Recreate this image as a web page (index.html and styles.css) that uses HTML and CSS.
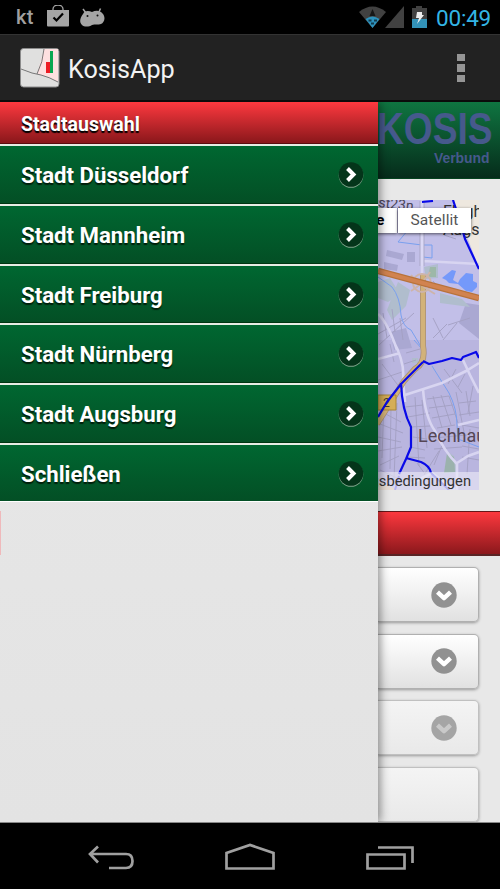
FILE: index.html
```html
<!DOCTYPE html>
<html lang="de">
<head>
<meta charset="utf-8">
<title>KosisApp</title>
<link rel="stylesheet" href="styles.css">
</head>
<body>
<div class="phone">
  <div class="status">
    <span class="kt">kt</span>
    <svg class="bag" width="22" height="22" viewBox="0 0 22 22"><path d="M6 5V4a5 4 0 0 1 10 0v1" fill="none" stroke="#a5a5a5" stroke-width="1.3"/><path d="M0 5h22v15.500q0 1-1 1H1q-1 0-1-1z" fill="#a5a5a5"/><path d="M6.500 12.500l3 3 6.500-7" fill="none" stroke="#000" stroke-width="2.200"/></svg>
    <svg class="bean" width="25" height="19" viewBox="0 0 25 19"><path d="M3 1L6 5M20.500 .5l-2 4.500" stroke="#a5a5a5" stroke-width="1.500"/><path d="M3 6C5 2 9 3 12 4c4-2 8-2 11 2 3 4 1 9-2 10-3 1-6 0-9 1-3 2-8 2-10 0-3-3-2-7 1-11z" fill="#a5a5a5"/><circle cx="7.500" cy="8" r="1" fill="#111"/><circle cx="17.500" cy="7.500" r="1" fill="#111"/></svg>
    <span class="grow"></span>
    <svg width="69" height="22" viewBox="0 0 69 22"><path d="M0 6q13.500-11 27 0L13.500 22z" fill="#414141"/><path d="M6.500 13q7-5 14 0l-7 9z" fill="#2c92bd"/><path d="M10.500 10L13.500 3l3 7z" fill="#171717"/><path d="M9.500 13.500h3v2h-3zM15 13.500h3v2h-3zM12 16.500h3v2h-3z" fill="#123b4d"/><path d="M26 22L45 0v22z" fill="#414141"/><path d="M53 2h4V0h6v2h5v11H53z" fill="#414141"/><path d="M53 13h15v9H53z" fill="#3292b8"/><path d="M58 6h5v3h2l-7 9 2-6h-3z" fill="#eee"/></svg>
    <span class="clock">00:49</span>
  </div>
  <div class="actionbar">
    <svg width="40" height="40" viewBox="0 0 40 40"><rect x=".5" y=".5" width="38.500" height="38.500" rx="3" fill="#e0e0df" stroke="#8b8b8b"/><path d="M24 1h14v33l-9-5-12-3z" fill="#fde0e0"/><path d="M24 1q-1 13-7 25M1 21q12 5 20 6 8 2 17 7" fill="none" stroke="#777" stroke-width="1"/><path d="M26 14h4v11h-4z" fill="#ed1c24"/><path d="M30 3h3v22h-3z" fill="#0aa651"/></svg>
    <span class="apptitle">KosisApp</span>
    <span class="overflow"><i></i><i></i><i></i></span>
  </div>
  <div class="content">
    <nav class="panel">
      <div class="divider">Stadtauswahl</div>
      <a class="item"><span>Stadt Düsseldorf</span><svg class="arrow" viewBox="0 0 26 26"><g id="chevron"><circle cx="13" cy="13.500" r="12.300" fill="#83a48c"/><circle cx="13" cy="12.500" r="12.300" fill="#04351a"/><path d="M9.500 6.500l6 6-6 6" fill="none" stroke="#fff" stroke-width="4"/></g></svg></a>
      <a class="item"><span>Stadt Mannheim</span><svg class="arrow" viewBox="0 0 26 26"><use href="#chevron"/></svg></a>
      <a class="item"><span>Stadt Freiburg</span><svg class="arrow" viewBox="0 0 26 26"><use href="#chevron"/></svg></a>
      <a class="item"><span>Stadt Nürnberg</span><svg class="arrow" viewBox="0 0 26 26"><use href="#chevron"/></svg></a>
      <a class="item"><span>Stadt Augsburg</span><svg class="arrow" viewBox="0 0 26 26"><use href="#chevron"/></svg></a>
      <a class="item"><span>Schließen</span><svg class="arrow" viewBox="0 0 26 26"><use href="#chevron"/></svg></a>
      <div class="sliver"></div>
    </nav>
    <main class="page">
      <header class="brand">
        <svg width="122" height="77" viewBox="378 102 122 77" font-family="Liberation Sans, sans-serif" font-weight="bold" fill="#46598c"><text x="377" y="144" font-size="45" textLength="115.500" lengthAdjust="spacingAndGlyphs">KOSIS</text><text x="434" y="162.500" font-size="14" textLength="55.500" lengthAdjust="spacingAndGlyphs">Verbund</text></svg>
      </header>
      <div class="map">
        <svg width="101" height="290" viewBox="378 200 101 290" fill="none">
          <path d="M378 200h101v290H378z" fill="#c2bfe8"/>
          <path d="M378 340h101v150H378z" fill="#b9b5df"/>
          <path d="M453 200h26v68z" fill="#eee8df"/>
          <g fill="#aaa8d2"><path d="M387 250l17 4-2 6-16-4zM384 262l14 3-1 6-13-2zM407 252h8v10h-8zM466 303l13 2v34l-20-16zM390 332l16-4 6 20-18 2zM445 213l10 0 3 8-12-1z"/></g>
          <g fill="#b0bdcd"><path d="M424 267l14-3v14l-12 1zM378 282l12-4 10 16-12 8-10-4zM440 293l22 6 8 8-30-4zM398 282l12 8-4 16-14 14-5-10zM448 452l6 4 4 16-13 1zM412 358h6v5h-6z"/></g>
          <path d="M430 267h6v10h-8z" fill="#9db8a8"/>
          <path d="M447 453l7 4 1 15-11 1z" fill="#9bb2ad"/>
          <g stroke="#a39fc2" stroke-width=".9">
            <path d="M379 345l35-32M378 334l28-16M383 313l4 25M392 309l3 23M400 318l3 22M378 359l22-7M390 344l4 18M382 364l18 24M378 380l24-8M406 353l14-4M404 364l12-4M433 318l10 20M433 338l14-14M443 340l14-17M448 325l22-7"/>
            <path d="M378 410l23 12M380 424l23 9M378 437l23 5M378 451l24-4M380 465l19-9M384 402l-2 56M391 408l-1 61M397 403l-3 76M378 418l8-13M380 470l17 8M405 407l18-2M408 417l22-4M410 427l20-1M413 437l14 2M410 447l15 3M407 457l18 1M415 397l4 69M422 400l5 48"/>
            <path d="M427 399l22-3M429 408l24-3M432 418l23-4M437 428l18-3M433 396l9 32M441 395l10 30M449 396l9 27M444 369l18 24M456 369l-8 15M465 374l-7 13M456 392l8 40M466 391l4 25M473 386l-5 27M459 403l17-2M459 415l20-3M433 438l34-3M434 449l28-2M434 465l11-27M424 475l15-24M462 425l17 3M462 446l17 3M462 457l17 3M470 429l-3 45M417 463l8 11"/>
            <path d="M444 235l12 4M430 225l20 3M426 284l52 15M433 281l7 9"/>
          </g>
          <path d="M408 230l-10 12 24 3M424 245l8 0v13l-9-1M378 277q10 7 14 10 8 10 9 28 2 12 10 15l12 20M414 340l8 9M432 366l17 27q8 16 8 32l1 14 21 8" stroke="#79a0ef"/>
          <path d="M422 200v152M423 261l56 3M393 340q12 22 10 40l2 22M405 395l37-12 24-12 13-8M423 389q2 28 12 42 9 20 22 33v26M463 360l7 15 9 18M458 425l21-5M457 463l11-7 11-4M378 314q10 9 19 36M378 359l22-6M410 484l22-11 23 17" stroke="#d8d5f1" stroke-width="2.600"/>
          <path d="M422 201v65" stroke="#aaa7c8" stroke-width="5"/><path d="M422 201v65" stroke="#dbd8f5" stroke-width="3"/>
          <path d="M423 274v72q3 17-8 23l-11 12-27 43" stroke="#a78e76" stroke-width="6"/><path d="M423 274v72q3 17-8 23l-11 12-27 43" stroke="#d2b279" stroke-width="4.500"/>
          <ellipse cx="422" cy="283" rx="9" ry="9" stroke="#cdb4aa" stroke-width="2"/><path d="M411 275q8 10 24 19M411 291q12-7 19-19" stroke="#cdb4aa" stroke-width="2"/>
          <path d="M378 271l101 27" stroke="#b8733b" stroke-width="6.500"/><path d="M378 271l101 27" stroke="#d18350" stroke-width="4"/>
          <path d="M442 278l10-8 4 1-3 9 5 3 2-4 6-6 7 1 0 7 4 2 0 4-5 5-6-1-8-7-9-1-3-3z" fill="#7499fa"/>
          <g font-family="Roboto, sans-serif" fill="#4b4657"><text x="378" y="207" font-size="14" transform="rotate(6 378 207)">st23n</text><text x="443" y="217" font-size="16" fill="#333">Flugh</text><text x="443" y="235" font-size="16" fill="#333">Augs</text></g>
          <path d="M378 395h18v15h-18z" fill="#d5ae57" stroke="#a98738"/><text x="383" y="407" font-family="Roboto, sans-serif" font-size="12" fill="#403c30">2</text>
          <g stroke="#0909e8" stroke-width="2.200" stroke-linejoin="round"><path d="M378 417l9-15 14-18 22-22M423 361l6 3 13-3 10-3 9 2 2-3 8-3 5-2 3 6M401 383q1 27 10 44v20l-5 12-7 15M406 458l15 4q9 4 10 11M422 202l11-1M453 200l7 21 5 18 14 30"/></g>
          <path d="M378 482l20 8h-20z" fill="#dfc59d"/>
          <text x="418" y="441.500" font-family="Roboto, sans-serif" font-size="18" fill="#554655">Lechhausen</text>
          <path d="M431 473l18 17M399 476l-4 14" stroke="#5b5be8" stroke-width="2"/>
        </svg>
        <div class="maptypes"><span class="karte">e</span><span class="satellit">Satellit</span></div>
        <div class="terms">gsbedingungen</div>
      </div>
      <div class="redbar"></div>
      <div class="fields">
        <div class="field"><svg viewBox="0 0 26 26"><circle cx="13" cy="13" r="12.700" fill="#919191"/><path d="M6.500 10.200l6.500 6 6.500-6" fill="none" stroke="#fff" stroke-width="4.400" stroke-linejoin="round"/></svg></div>
        <div class="field"><svg viewBox="0 0 26 26"><circle cx="13" cy="13" r="12.700" fill="#919191"/><path d="M6.500 10.200l6.500 6 6.500-6" fill="none" stroke="#fff" stroke-width="4.400" stroke-linejoin="round"/></svg></div>
        <div class="field off"><svg viewBox="0 0 26 26"><circle cx="13" cy="13" r="12.700" fill="#a5a5a5"/><path d="M6.500 10.200l6.500 6 6.500-6" fill="none" stroke="#c9c9c9" stroke-width="4.400" stroke-linejoin="round"/></svg></div>
        <div class="field off"></div>
      </div>
    </main>
  </div>
  <div class="navbar">
    <svg width="500" height="66" viewBox="0 823 500 66" fill="none" stroke="#a0a0a0" stroke-width="2.700"><path d="M90 854h36q6.500 0 6.500 7t-6.500 7h-17M98 846.500l-8 7.500 8 8.500"/><path d="M226.500 868.500V853l23.500-8 23.500 8v15.500z"/><path d="M367.500 854.500h37v14h-37zM378 847.500h34.500V863"/></svg>
  </div>
</div>
</body>
</html>
```
FILE: styles.css
```css
* { box-sizing: border-box; }
body { margin: 0; font-family: Roboto, sans-serif; background: #000; }
svg { display: block; flex: none; }
.phone { width: 500px; height: 889px; display: flex; flex-direction: column; overflow: hidden; }

.status { height: 34px; flex: none; display: flex; align-items: center; padding: 0 9px 0 16px; background: #000; }
.kt { font-size: 20px; font-weight: 500; letter-spacing: .3px; color: #a0a0a0; width: 31px; line-height: 34px; }
.bag { margin-right: 11px; margin-top: -2px; }
.grow { flex: 1; }
.clock { width: 55px; margin-left: 8px; margin-top: 2px; font-size: 22.500px; letter-spacing: -.2px; color: #33b5e5; white-space: nowrap; }

.actionbar { height: 68px; flex: none; display: flex; align-items: center; padding: 0 35px 0 20px; background: #222; border-top: 1px solid #333; border-bottom: 2px solid #0b0b0b; }
.apptitle { flex: 1; margin-left: 8px; padding-top: 3px; font-size: 25.200px; color: #f3f3f3; }
.overflow { display: flex; flex-direction: column; gap: 3px; margin-top: 1px; }
.overflow i { width: 8px; height: 7.500px; background: #959595; }

.content { height: 721px; flex: none; display: grid; grid-template-columns: 378px 122px; background: #e8e8e8; border-bottom: 1px solid #888; overflow: hidden; }
.panel { z-index: 1; background: linear-gradient(#e9e9e9, #e3e3e3); box-shadow: 2px 0 9px rgba(0,0,0,.45); }
.divider { height: 42.300px; padding-left: 21px; line-height: 45px; font-size: 19.500px; font-weight: bold; color: #fff; text-shadow: 0 1.500px 1px #000; background: linear-gradient(#fd393f, #8a171b); border-bottom: 1px solid #5b0c0e; }
.item { height: 59.700px; display: flex; align-items: center; justify-content: space-between; padding: 1px 14px 0 21px; color: #fff; font-size: 22.200px; font-weight: bold; text-shadow: 0 1.500px 1px #001f0b; background: linear-gradient(#006731, #034f25); border-top: 2px solid #e7ece4; border-bottom: 1px solid #003512; }
.item:nth-last-child(2) { border-bottom: 1px solid #fff; }
.arrow { width: 26px; height: 26px; }
.sliver { width: 1px; height: 44px; margin-top: 9px; background: #efb9bb; }

.page { min-width: 0; }
.brand { height: 77px; background: linear-gradient(#0f7541, #062c1b); border-bottom: 1px solid #05431f; }
.map { position: relative; width: 101px; height: 290px; margin-top: 21px; }
.map > svg { overflow: hidden; }
.maptypes { position: absolute; top: 8px; right: 8px; display: flex; font-size: 15.500px; line-height: 25px; color: #555; }
.maptypes span { background: #fff; box-shadow: 0 1px 3px rgba(0,0,0,.6); white-space: nowrap; }
.maptypes .karte { width: 21px; padding-right: 13px; font-weight: bold; color: #000; margin-right: 1px; }
.satellit { width: 73px; text-align: center; letter-spacing: .1px; }
.terms { position: absolute; left: -8px; right: 0; bottom: 0; height: 18px; padding-right: 8px; display: flex; justify-content: flex-end; font-size: 14.700px; line-height: 19px; color: #333; background: rgba(238,236,248,.6); }
.redbar { height: 45px; margin-top: 21px; background: linear-gradient(#fc383e, #8b181c); border-top: 1px solid #651719; border-bottom: 2px solid #5a2425; }
.fields { display: flex; flex-direction: column; gap: 11.700px; padding-top: 11px; }
.field { width: 101px; height: 55px; flex: none; display: flex; align-items: center; justify-content: flex-end; padding-right: 21px; background: linear-gradient(#fff, #e1e1e1); border: 1.500px solid #b0b0b0; border-left: 0; border-radius: 0 5px 5px 0; box-shadow: 0 1px 3px rgba(0,0,0,.35); }
.field svg { width: 26px; height: 26px; }
.field.off { background: linear-gradient(#f4f4f4, #e9e9e9); border-color: #c0c0c0; }

.navbar { height: 66px; background: #000; }
```
